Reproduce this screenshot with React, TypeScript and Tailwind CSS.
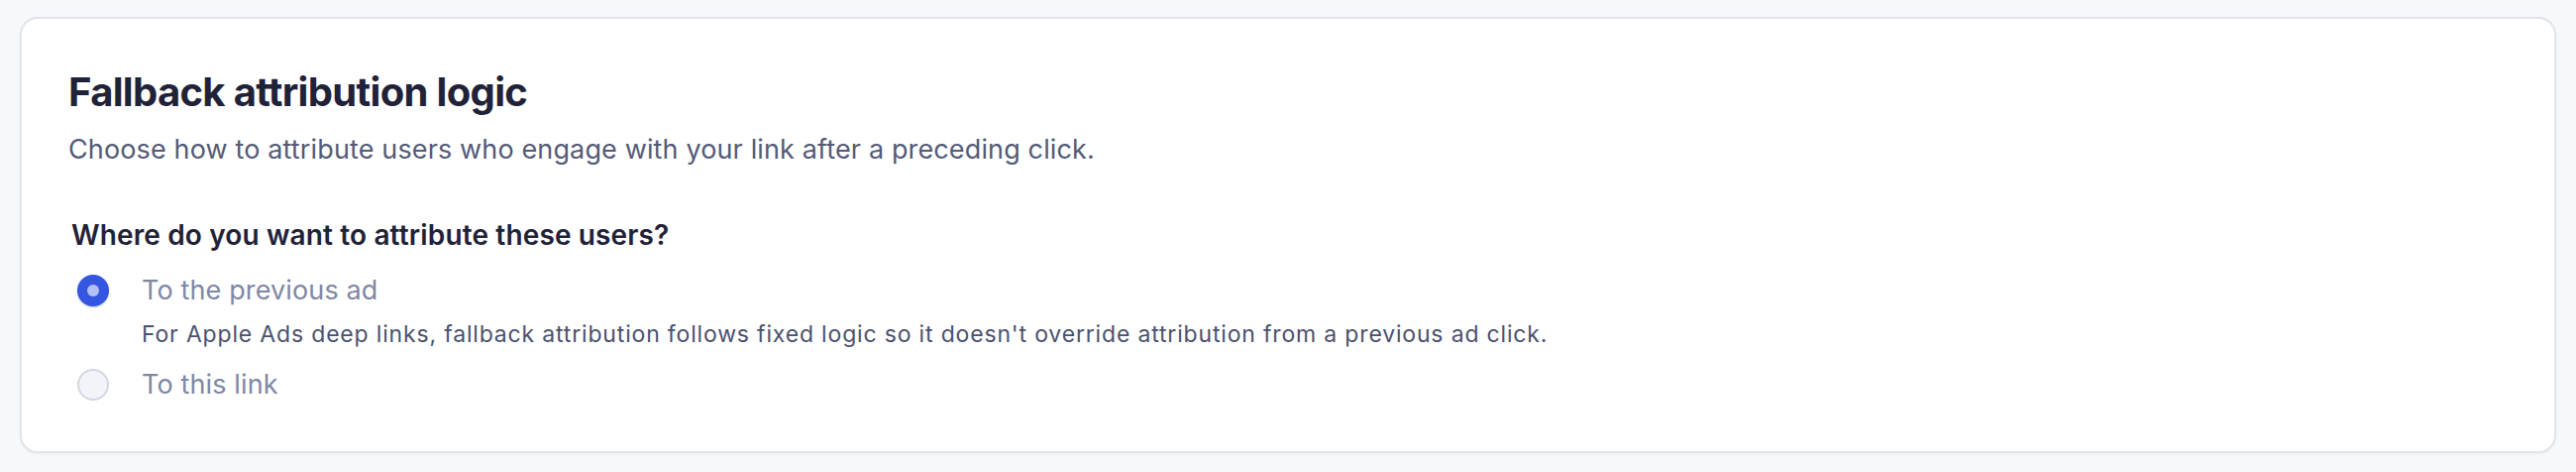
import React from "react";

export default function App() {
  return (
    <div
      className="min-h-screen w-full bg-[#f7f8fa] px-[20px] pt-[17px]"
      style={{ fontFamily: "Inter, 'Noto Sans', sans-serif" }}
    >
      <div className="h-[440px] rounded-[18px] border-2 border-[#e2e4ed] bg-white pl-[47px] pr-[48px] pt-[50px] shadow-[0_1px_3px_rgba(30,35,70,0.05)]">
        <h1 className="text-[40px] font-bold leading-[48px] tracking-[-0.017em] text-[#1f2238]">
          Fallback attribution logic
        </h1>
        <p className="mt-[16px] text-[27px] leading-[36px] tracking-[0.005em] text-[#545a78]">
          Choose how to attribute users who engage with your link after a preceding click.
        </p>
        <div className="mt-[50px] pl-[3px]">
          <div className="text-[28px] font-semibold leading-[36px] tracking-[0.005em] text-[#1f2238]">
            Where do you want to attribute these users?
          </div>
          <div className="mt-[20px] flex flex-col">
            <div className="flex items-start gap-[33px] pl-[6px]">
              <div className="flex h-[36px] items-center">
                <span className="flex h-[32px] w-[32px] items-center justify-center rounded-full bg-[#3456e0] shadow-[0_1px_2px_rgba(30,50,160,0.3)]">
                  <span className="h-[12px] w-[12px] rounded-full bg-[#b3c0f3]" />
                </span>
              </div>
              <div className="flex flex-col">
                <span className="text-[27px] leading-[36px] tracking-[0.005em] text-[#8087a5]">To the previous ad</span>
                <span className="mt-[10px] text-[23px] leading-[32px] tracking-[0.036em] text-[#4b516e]">
                  For Apple Ads deep links, fallback attribution follows fixed logic so it doesn't override attribution from a previous ad click.
                </span>
              </div>
            </div>
            <div className="mt-[17px] flex items-start gap-[33px] pl-[6px]">
              <div className="flex h-[36px] items-center">
                <span className="h-[32px] w-[32px] rounded-full border-2 border-[#d3d6e3] bg-[#f3f4f9]" />
              </div>
              <span className="text-[27px] leading-[36px] tracking-[0.005em] text-[#8087a5]">To this link</span>
            </div>
          </div>
        </div>
      </div>
    </div>
  );
}
